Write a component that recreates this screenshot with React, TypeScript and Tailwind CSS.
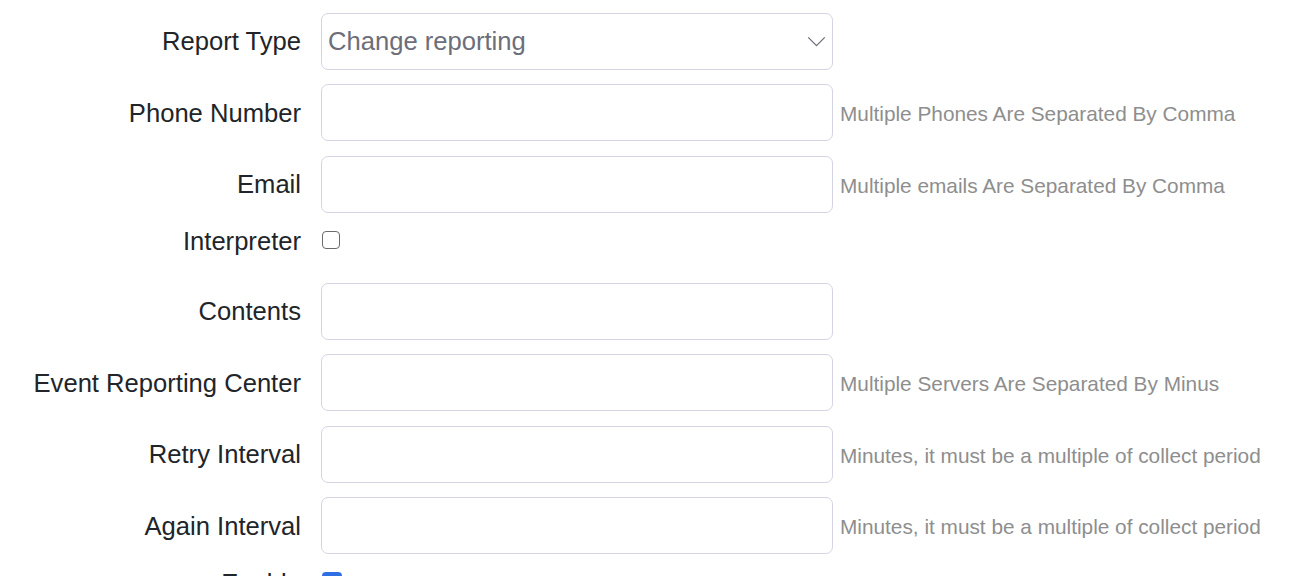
import React from 'react';

interface Field {
  label: string;
  hint?: string;
}

const topFields: Field[] = [
  { label: 'Phone Number', hint: 'Multiple Phones Are Separated By Comma' },
  { label: 'Email', hint: 'Multiple emails Are Separated By Comma' },
];

const bottomFields: Field[] = [
  { label: 'Contents' },
  { label: 'Event Reporting Center', hint: 'Multiple Servers Are Separated By Minus' },
  { label: 'Retry Interval', hint: 'Minutes, it must be a multiple of collect period' },
  { label: 'Again Interval', hint: 'Minutes, it must be a multiple of collect period' },
];

const Label: React.FC<{ text: string }> = ({ text }) => (
  <label className="w-[301px] shrink-0 text-right text-[25.6px] leading-[28px] text-[#212529] whitespace-nowrap">
    {text}
  </label>
);

const InputRow: React.FC<{ field: Field }> = ({ field }) => (
  <div className="flex items-center h-[57px]">
    <Label text={field.label} />
    <input
      type="text"
      className="ml-[20px] w-[512px] h-[57px] shrink-0 rounded-[7px] border border-[#d4d4e4] bg-white px-3 text-[25.6px] outline-none"
    />
    {field.hint && (
      <span className="ml-[7px] mt-[3px] text-[20.8px] text-[#8e8e8e] whitespace-nowrap">{field.hint}</span>
    )}
  </div>
);

const CheckRow: React.FC<{ label: string; checked?: boolean }> = ({ label, checked }) => (
  <div className="flex items-start h-[41px]">
    <Label text={label} />
    {checked ? (
      <span className="ml-[21px] mt-[3.5px] w-[20px] h-[20px] rounded-[4px] bg-[#2f6fe4] flex items-center justify-center">
        <svg viewBox="0 0 16 16" className="w-[14px] h-[14px]" fill="none" stroke="white" strokeWidth="2.2">
          <path d="M3.5 8.5l3 3 6-6.5" />
        </svg>
      </span>
    ) : (
      <span className="ml-[21px] mt-[3.5px] w-[18px] h-[18px] rounded-[4px] border-[1.5px] border-[#6b6b6b] bg-white" />
    )}
  </div>
);

export default function App() {
  return (
    <div className="w-[1310px] h-[576px] overflow-hidden bg-white" style={{ fontFamily: '"Liberation Sans", Arial, sans-serif' }}>
      <div className="flex flex-col gap-[14.5px] pt-[12.5px]">
        <div className="flex items-center h-[57px]">
          <Label text="Report Type" />
          <div className="ml-[20px] w-[512px] h-[57px] shrink-0 rounded-[7px] border border-[#d4d4e4] bg-white flex items-center justify-between pl-[6px] pr-[6px]">
            <span className="text-[25.6px] text-[#6c6e79]">Change reporting</span>
            <svg viewBox="0 0 20 12" className="w-[19px] h-[11px]" fill="none" stroke="#6c6e79" strokeWidth="1.4">
              <path d="M1 1.5l9 9 9-9" />
            </svg>
          </div>
        </div>
        {topFields.map((f) => (
          <InputRow key={f.label} field={f} />
        ))}
        <CheckRow label="Interpreter" />
        {bottomFields.map((f) => (
          <InputRow key={f.label} field={f} />
        ))}
        <CheckRow label="Enable" checked />
      </div>
    </div>
  );
}
